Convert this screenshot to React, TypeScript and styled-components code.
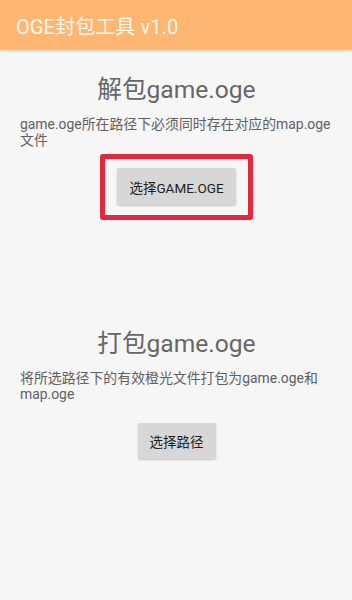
import React from 'react';
import styled, { createGlobalStyle } from 'styled-components';

const GlobalStyle = createGlobalStyle`
  html, body {
    margin: 0;
    padding: 0;
    background: #f6f6f7;
    font-family: Roboto, "Noto Sans CJK SC", sans-serif;
  }
`;

const Page = styled.div`
  width: 352px;
  min-height: 600px;
  background: #f6f6f7;
`;

const AppBar = styled.div`
  height: 50px;
  background: #feb673;
  display: flex;
  align-items: center;
  padding: 0 16px;
  box-shadow: 0 1px 3px rgba(0, 0, 0, 0.18);
  position: relative;
`;

const AppTitle = styled.h1`
  margin: 0;
  font-size: 20px;
  font-weight: 400;
  color: #fff8ee;
  letter-spacing: 0.1px;
`;

const Section = styled.section<{ $top: number }>`
  display: flex;
  flex-direction: column;
  align-items: center;
  padding: ${(p) => p.$top}px 19px 0 20px;
`;

const Heading = styled.h2`
  margin: 0;
  font-size: 24.6px;
  line-height: 30px;
  font-weight: 400;
  color: #666666;
`;

const Desc = styled.p`
  align-self: stretch;
  margin: 11px 0 0;
  font-size: 13.9px;
  line-height: 16px;
  color: #606060;
`;

const Highlight = styled.div`
  margin-top: 6px;
  padding: 9px 12px 10px;
  border: 5px solid #e0293d;
  border-radius: 3px;
`;

const Button = styled.button<{ $mt?: number; $h?: number }>`
  margin-top: ${(p) => p.$mt ?? 0}px;
  height: ${(p) => p.$h ?? 37}px;
  padding: 0 12px;
  border: 0;
  border-radius: 2px;
  background: #d7d7d7;
  box-shadow: 0 1px 2px rgba(0, 0, 0, 0.2);
  font-family: Roboto, "Noto Sans CJK SC", sans-serif;
  font-size: 13.5px;
  color: #1e1e1e;
  cursor: pointer;
`;

const App = () => {
  return (
    <Page>
      <GlobalStyle />
      <AppBar>
        <AppTitle>OGE封包工具 v1.0</AppTitle>
      </AppBar>
      <Section $top={25}>
        <Heading>解包game.oge</Heading>
        <Desc>game.oge所在路径下必须同时存在对应的map.oge文件</Desc>
        <Highlight>
          <Button>选择GAME.OGE</Button>
        </Highlight>
      </Section>
      <Section $top={109}>
        <Heading>打包game.oge</Heading>
        <Desc>将所选路径下的有效橙光文件打包为game.oge和map.oge</Desc>
        <Button $mt={21} $h={36}>选择路径</Button>
      </Section>
    </Page>
  );
};

export default App;
